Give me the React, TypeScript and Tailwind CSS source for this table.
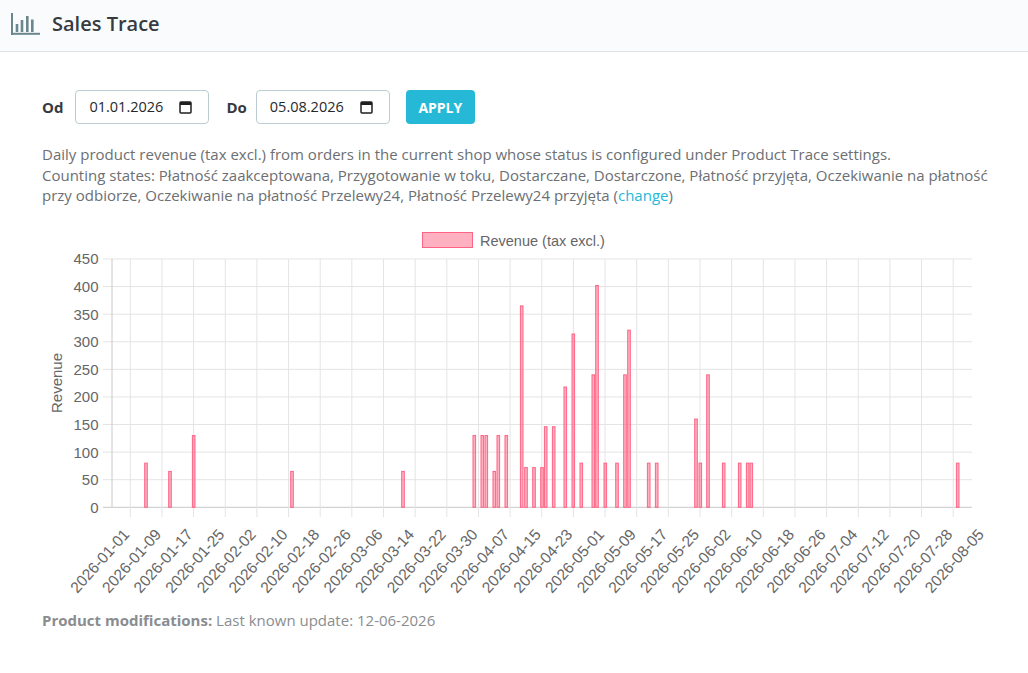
import React from 'react';

const Y0 = 215;
const ZERO = 507.3;
const PER = 0.5518;
const y = (v: number) => ZERO - v * PER - Y0;

const bars: [number, number][] = [
  [146, 80], [170, 65], [193.7, 130], [292, 65], [403, 65],
  [474.3, 130], [482.3, 130], [486.3, 130], [494.3, 65], [498.3, 130], [506.3, 130],
  [521.7, 365], [526, 72], [534, 72], [542, 72], [545.7, 146], [553.7, 146],
  [565.3, 218], [573.3, 314], [581.3, 80], [593.3, 240], [597, 402], [605.3, 80],
  [617, 80], [625, 240], [629, 321], [648.7, 80], [656.7, 80],
  [696, 160], [700.3, 80], [708, 240], [723.7, 80], [739.7, 80], [747.7, 80], [751.3, 80],
  [957.7, 80],
];

const addDays = (d: number) => {
  const dt = new Date(Date.UTC(2026, 0, 1 + d));
  return dt.toISOString().slice(0, 10);
};

const xTicks = Array.from({ length: 28 }, (_, k) => ({
  x: 130.3 + k * 31.65,
  label: addDays(k * 8),
}));

const yTicks = [0, 50, 100, 150, 200, 250, 300, 350, 400, 450];

const Chart = () => {
  const left = 112;
  const right = 972;
  return (
    <svg width={1028} height={390} className="block" style={{ fontFamily: '"Liberation Sans", Arial, sans-serif' }}>
      {/* legend */}
      <rect x={422.5} y={232.5 - Y0} width={50} height={15} fill="rgba(255,99,132,0.5)" stroke="#ff6384" strokeWidth={1} />
      <text x={480} y={245.5 - Y0} fontSize={14.5} fill="#666">Revenue (tax excl.)</text>

      {/* horizontal grid */}
      {yTicks.map((v) => (
        <g key={v}>
          <line x1={103} x2={right} y1={y(v)} y2={y(v)} stroke={v === 0 ? '#c8c8c8' : '#e4e4e4'} strokeWidth={1} />
          <text x={98.5} y={y(v) + 5.5} fontSize={15} fill="#666" textAnchor="end">{v}</text>
        </g>
      ))}

      {/* vertical grid */}
      <line x1={left} x2={left} y1={259 - Y0} y2={ZERO - Y0} stroke="#c8c8c8" strokeWidth={1} />
      {xTicks.map((t) => (
        <g key={t.label}>
          {t.x < right && (
            <line x1={t.x} x2={t.x} y1={259 - Y0} y2={517 - Y0} stroke="#e4e4e4" strokeWidth={1} />
          )}
          <text
            x={t.x}
            y={535 - Y0}
            fontSize={15.5}
            fill="#666"
            textAnchor="end"
            transform={`rotate(-48 ${t.x} ${535 - Y0})`}
          >
            {t.label}
          </text>
        </g>
      ))}

      {/* axis title */}
      <text
        x={62}
        y={383 - Y0}
        fontSize={15}
        fill="#666"
        textAnchor="middle"
        transform={`rotate(-90 62 ${383 - Y0})`}
      >
        Revenue
      </text>

      {/* bars */}
      {bars.map(([bx, v], i) => (
        <rect
          key={i}
          x={bx - 1.3}
          y={y(v)}
          width={2.6}
          height={v * PER}
          fill="rgba(255,99,132,0.5)"
          stroke="#ff6384"
          strokeWidth={1}
        />
      ))}
    </svg>
  );
};

const CalendarIcon = () => (
  <svg width="13" height="14" viewBox="0 0 13 14" className="shrink-0">
    <rect x="1" y="2" width="11" height="11" rx="1" fill="none" stroke="#1f1f1f" strokeWidth="1.5" />
    <rect x="1" y="2" width="11" height="3" fill="#1f1f1f" />
  </svg>
);

const DateField = ({ value }: { value: string }) => (
  <div className="flex items-center justify-between w-[134px] h-[34px] pl-[13px] pr-[16px] border border-[#bbcdd2] rounded-[4px] bg-white">
    <span className="text-[14.5px] text-[#25282b]">{value}</span>
    <CalendarIcon />
  </div>
);

const App = () => {
  return (
    <div className="min-h-screen bg-white" style={{ fontFamily: '"Open Sans", "Noto Sans", sans-serif' }}>
      <div className="h-[52px] bg-[#fafbfc] border-b border-[#dfe3e6] flex items-center pl-[11px] pb-[4px]">
        <svg width="29" height="22" viewBox="0 0 29 22" className="mr-[12px]">
          <rect x="0" y="0" width="2" height="22" fill="#6c868e" />
          <rect x="0" y="19.8" width="29" height="2" fill="#6c868e" />
          <rect x="4.7" y="11" width="2.6" height="8" fill="#6c868e" />
          <rect x="9.7" y="7" width="2.6" height="12" fill="#6c868e" />
          <rect x="15" y="3" width="2.6" height="16" fill="#6c868e" />
          <rect x="20" y="6.5" width="2.6" height="12.5" fill="#6c868e" />
        </svg>
        <h1 className="text-[20px] font-semibold text-[#363a41] leading-none">Sales Trace</h1>
      </div>

      <div className="pl-[42px] pr-[36px] pt-[38px]">
        <div className="flex items-center">
          <span className="text-[15px] font-bold text-[#363a41] mr-[12px]">Od</span>
          <DateField value="01.01.2026" />
          <span className="text-[15px] font-bold text-[#363a41] ml-[17px] mr-[9px]">Do</span>
          <DateField value="05.08.2026" />
          <button className="ml-[16px] h-[34px] w-[69px] rounded-[4px] bg-[#25b9d7] text-white text-[14px] font-bold">
            APPLY
          </button>
        </div>

        <p className="mt-[20px] text-[15px] leading-[20.5px] text-[#6c6f73]">
          Daily product revenue (tax excl.) from orders in the current shop whose status is configured under Product Trace settings.
          <br />
          Counting states: Płatność zaakceptowana, Przygotowanie w toku, Dostarczane, Dostarczone, Płatność przyjęta, Oczekiwanie na płatność przy odbiorze, Oczekiwanie na płatność Przelewy24, Płatność Przelewy24 przyjęta (<a className="text-[#25b9d7]">change</a>)
        </p>
      </div>

      <div className="mt-[9px]">
        <Chart />
      </div>

      <p className="pl-[42px] mt-[4px] text-[15px] text-[#8a8d90]">
        <span className="font-bold">Product modifications:</span> Last known update: 12-06-2026
      </p>
    </div>
  );
};

export default App;
